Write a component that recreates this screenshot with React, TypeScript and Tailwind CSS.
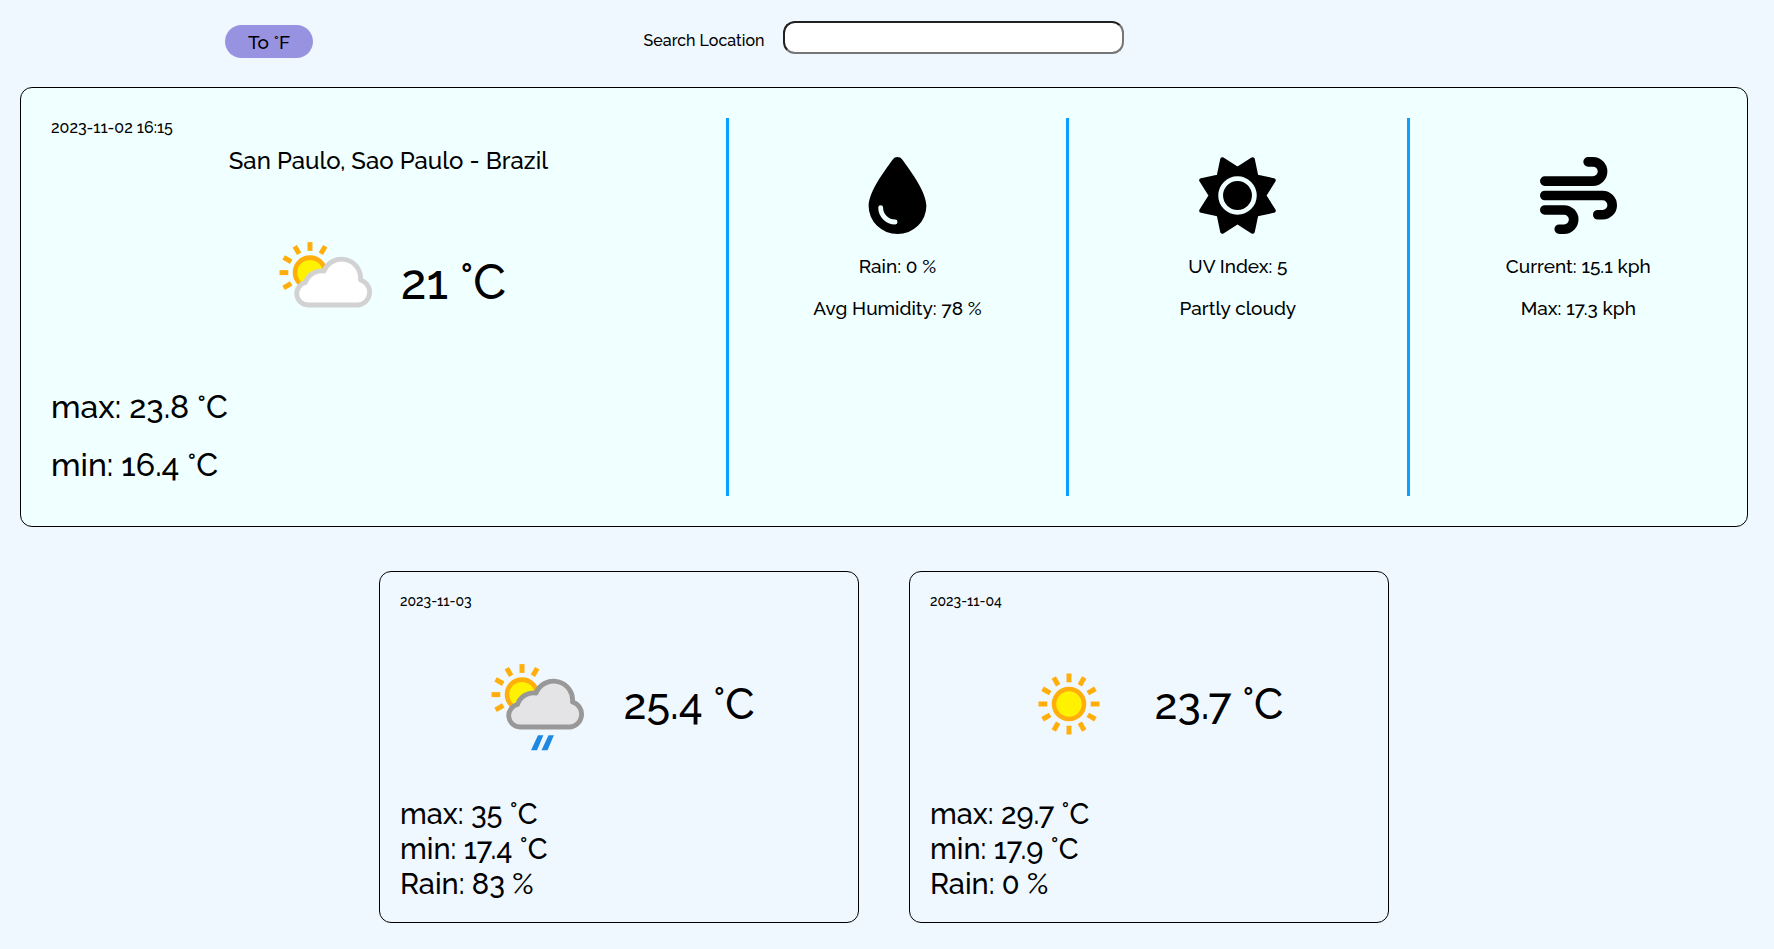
import { useId, useState } from "react";
import type { ReactNode } from "react";

const INK = "font-['Raleway','Lato',sans-serif] font-medium oldstyle-nums text-black";

type Sky = "partly" | "rain" | "sunny";

function Sun({ cx, cy, angles }: { cx: number; cy: number; angles: number[] }) {
  return (
    <g>
      <circle cx={cx} cy={cy} r="15" fill="#fff200" stroke="#ffae0c" strokeWidth="4.6" />
      {angles.map((a) => (
        <rect
          key={a}
          x={cx - 2.5}
          y={cy - 30.5}
          width="5"
          height="8.8"
          fill="#ffae0c"
          transform={`rotate(${a} ${cx} ${cy})`}
        />
      ))}
    </g>
  );
}

function SkyIcon({ sky }: { sky: Sky }) {
  if (sky === "sunny") {
    return (
      <svg viewBox="0 0 110 110" className="size-[110px] shrink-0" aria-hidden="true">
        <Sun cx={54} cy={55} angles={[0, 30, 60, 90, 120, 150, 180, 210, 240, 270, 300, 330]} />
      </svg>
    );
  }
  const rainy = sky === "rain";
  return (
    <svg viewBox="-3 0 110 110" className="size-[110px] shrink-0" aria-hidden="true">
      <Sun cx={36} cy={45.6} angles={[0, 30, 240, 270, 300, 330]} />
      <path
        d="M34 78A11.4 11.4 0 0 1 31.5 55.5A17 17 0 0 1 50 44A19 19 0 0 1 86.5 53A12.8 12.8 0 0 1 84 78Z"
        fill={rainy ? "#e4e4e6" : "#ffffff"}
        stroke={rainy ? "#989898" : "#d2d2d2"}
        strokeWidth="4.8"
        strokeLinejoin="round"
      />
      {rainy && (
        <path
          d="M52 86.3h5.4L51 101.3h-6zM62.5 86.3h5.4l-6.4 15h-6z"
          fill="#1e88e5"
        />
      )}
    </svg>
  );
}

function DropIcon() {
  return (
    <svg viewBox="0 0 16 16" className="size-[77px]" aria-hidden="true">
      <path d="M8 0C7.6 0 7.3.15 7.1.42C5.5 2.6 2 7.2 2 10.2A6 5.8 0 0 0 14 10.2C14 7.2 10.5 2.6 8.9.42C8.7.15 8.4 0 8 0Z" />
      <path d="M4.5 10.5a3 3 0 0 0 3 3" fill="none" stroke="#f0ffff" strokeLinecap="round" />
    </svg>
  );
}

function UvIcon() {
  return (
    <svg viewBox="0 0 16 16" className="size-[77px]" aria-hidden="true">
      <path
        d="M4.85.5L8 2.5L11.15.5L11.9 4.1L15.5 4.85L13.5 8L15.5 11.15L11.9 11.9L11.15 15.5L8 13.5L4.85 15.5L4.1 11.9L.5 11.15L2.5 8L.5 4.85L4.1 4.1Z"
        stroke="black"
        strokeWidth="0.9"
        strokeLinejoin="round"
      />
      <circle cx="8" cy="8" r="3.5" stroke="#f0ffff" />
    </svg>
  );
}

function WindIcon() {
  return (
    <svg
      viewBox="0 0 16 16"
      className="size-[77px]"
      fill="none"
      stroke="black"
      strokeWidth="2"
      strokeLinecap="round"
      aria-hidden="true"
    >
      <path d="M1 5H11a2 2 0 0 0 0-4H10M1 8H13a2 2 0 0 1 0 4H12M1 11H5a2 2 0 0 1 0 4H4" />
    </svg>
  );
}

function Detail({ icon, lines }: { icon: ReactNode; lines: string[] }) {
  return (
    <section className="flex flex-1 flex-col items-center gap-[22px] border-l-[3px] border-[#0aa0ff] pt-[39px] text-[19px] leading-5">
      {icon}
      {lines.map((line) => (
        <p key={line}>{line}</p>
      ))}
    </section>
  );
}

interface Day {
  date: string;
  sky: Sky;
  avg: number;
  max: number;
  min: number;
  rain: number;
}

const DAYS: Day[] = [
  { date: "2023-11-03", sky: "rain", avg: 25.4, max: 35, min: 17.4, rain: 83 },
  { date: "2023-11-04", sky: "sunny", avg: 23.7, max: 29.7, min: 17.9, rain: 0 },
];

export default function App() {
  const [fahrenheit, setFahrenheit] = useState(false);
  const searchId = useId();
  const temp = (c: number) =>
    fahrenheit ? `${Math.round((c * 9) / 5 * 10 + 320) / 10} °F` : `${c} °C`;

  return (
    <div className={`min-h-screen bg-[#f0f8ff] px-5 pb-6 ${INK}`}>
      <header className="mr-1.5 grid grid-cols-[1fr_auto_1fr] items-start pt-[21px]">
        <button
          type="button"
          onClick={() => setFahrenheit(!fahrenheit)}
          className="mt-1 ml-[205px] h-[33px] w-[88px] rounded-full bg-[#9893e1] text-[19px] leading-[22px]"
        >
          {fahrenheit ? "To °C" : "To °F"}
        </button>
        <div className="flex items-center gap-[19px]">
          <label htmlFor={searchId} className="pt-1.5 text-base">
            Search Location
          </label>
          <input
            id={searchId}
            type="text"
            className="h-[33px] w-[341px] rounded-xl border-2 border-t-[#212121] border-r-[#767676] border-b-[#767676] border-l-[#212121] bg-white px-3"
          />
        </div>
      </header>

      <main className="mr-1.5">
        <article className="mt-[29px] flex min-h-[440px] rounded-xl border border-black bg-[#f0ffff] py-[30px] pl-[30px]">
          <section className="flex flex-2 flex-col">
            <time className="text-base leading-5">2023-11-02 16:15</time>
            <h1 className="mt-2 text-center text-2xl leading-[30px]">
              San Paulo, Sao Paulo - Brazil
            </h1>
            <div className="mt-[51px] flex items-center justify-center gap-5">
              <SkyIcon sky="partly" />
              <p className="text-5xl">{temp(21)}</p>
            </div>
            <div className="mt-auto mb-3 flex flex-col gap-5 text-[32px] leading-[38px]">
              <p>max: {temp(23.8)}</p>
              <p>min: {temp(16.4)}</p>
            </div>
          </section>
          <Detail icon={<DropIcon />} lines={["Rain: 0 %", "Avg Humidity: 78 %"]} />
          <Detail icon={<UvIcon />} lines={["UV Index: 5", "Partly cloudy"]} />
          <Detail icon={<WindIcon />} lines={["Current: 15.1 kph", "Max: 17.3 kph"]} />
        </article>

        <div className="mt-11 flex flex-wrap justify-center gap-[50px]">
          {DAYS.map((day) => (
            <article
              key={day.date}
              className="flex w-[480px] flex-col rounded-xl border border-black p-5"
            >
              <time className="text-sm leading-[18px]">{day.date}</time>
              <div className="mt-[39px] flex items-center justify-center gap-[30px]">
                <SkyIcon sky={day.sky} />
                <p className="text-[43px] leading-[52px]">{temp(day.avg)}</p>
              </div>
              <div className="mt-[38px] text-[29px] leading-[35px]">
                <p>max: {temp(day.max)}</p>
                <p>min: {temp(day.min)}</p>
                <p>Rain: {day.rain} %</p>
              </div>
            </article>
          ))}
        </div>
      </main>
    </div>
  );
}
